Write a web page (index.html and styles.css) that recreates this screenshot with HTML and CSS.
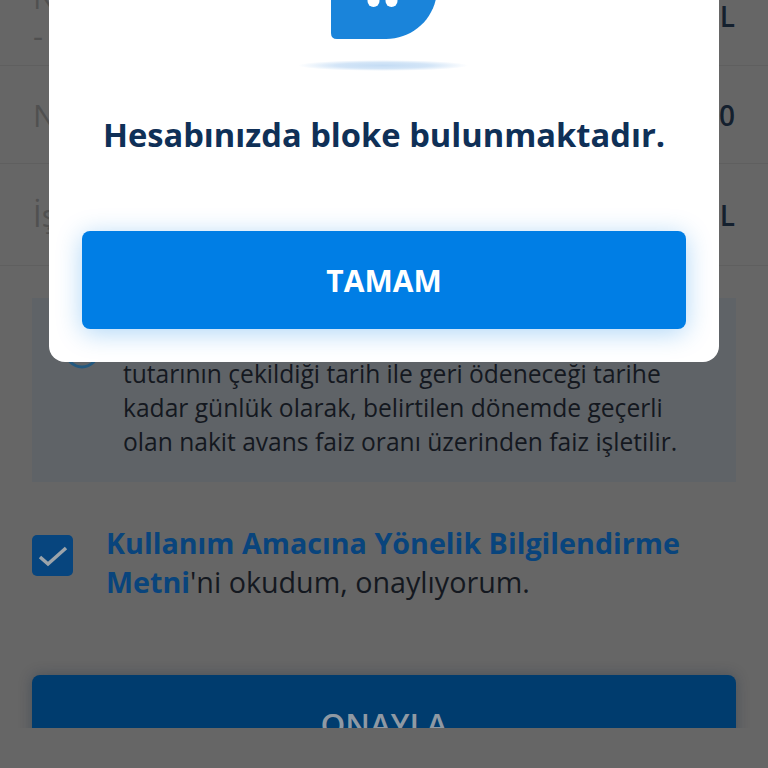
FILE: index.html
```html
<!DOCTYPE html>
<html lang="tr">
<head>
<meta charset="utf-8">
<title>Hesap</title>
<link rel="stylesheet" href="styles.css">
</head>
<body>
<div class="screen">
  <main class="page">
    <div class="row row-first"><div class="row-label">N<br>-</div><div class="row-value">L</div></div>
    <div class="row"><div class="row-label">N</div><div class="row-value">0</div></div>
    <div class="row row-last"><div class="row-label">İş</div><div class="row-value">L</div></div>
    <section class="info">
      <svg class="info-icon" width="36" height="36" viewBox="0 0 36 36"><circle cx="18" cy="18" r="16" fill="none" stroke="#24597f" stroke-width="3"/></svg>
      <p class="info-text">tutarının çekildiği tarih ile geri ödeneceği tarihe<br>kadar günlük olarak, belirtilen dönemde geçerli<br>olan nakit avans faiz oranı üzerinden faiz işletilir.</p>
    </section>
    <label class="consent">
      <span class="checkbox"><svg width="41" height="41" viewBox="0 0 41 41"><path d="M8 22l8 7L34 13" fill="none" stroke="#9ca4aa" stroke-width="3.500"/></svg></span>
      <span class="consent-text"><b class="link">Kullanım Amacına Yönelik Bilgilendirme Metni</b>'ni okudum, onaylıyorum.</span>
    </label>
    <div class="approve">ONAYLA</div>
  </main>
  <div class="footer-mask"></div>
  <div class="modal">
    <svg class="illustration" width="166" height="71" viewBox="0 0 166 71">
      <defs><radialGradient id="sh"><stop offset="0" stop-color="#c4dcf4"/><stop offset=".55" stop-color="#d3e5f7"/><stop offset="1" stop-color="#ffffff"/></radialGradient></defs>
      <path d="M31 -10H137C136 18 113 39 86 39H37Q31 39 31 33Z" fill="#1a84da"/>
      <circle cx="73.500" cy="1" r="6" fill="#fff"/><circle cx="91.500" cy="1" r="6" fill="#fff"/>
      <ellipse cx="83" cy="65.500" rx="85" ry="5.500" fill="url(#sh)"/>
    </svg>
    <h1 class="modal-title">Hesabınızda bloke bulunmaktadır.</h1>
    <button class="modal-button" type="button">TAMAM</button>
  </div>
</div>
</body>
</html>
```

FILE: styles.css
```css
* { box-sizing: border-box; }
html, body { margin: 0; padding: 0; }
body { width: 768px; height: 768px; overflow: hidden; background: #666; font-family: "Open Sans", sans-serif; }
.screen { position: relative; width: 768px; height: 768px; overflow: hidden; background: #666; }
.page { display: flex; flex-direction: column; margin-top: -34px; }
.row { display: flex; justify-content: space-between; height: 98px; padding: 0 33px; align-items: center; border-bottom: 1px solid #5f5f5f; color: #505050; font-size: 32px; line-height: 44px; }
.row-first { height: 100px; }
.row-last { height: 102px; }
.row-label { font-size: 31px; line-height: 38px; }
.row-value { color: #14202e; font-weight: 600; font-size: 28px; }
.info { display: flex; gap: 23px; margin: 32px 32px 0; padding: 0 32px; height: 184px; background: #5f6367; align-items: flex-end; }
.info-icon { flex: none; align-self: flex-start; margin-top: 35px; }
.info-text { margin: 0 0 23px; font-size: 24.600px; line-height: 34px; color: #14181f; white-space: nowrap; }
.consent { display: flex; gap: 33px; margin: 43px 32px 0; align-items: flex-start; }
.checkbox { flex: none; width: 41px; height: 41px; margin-top: 10px; background: #07457e; border-radius: 5px; }
.checkbox svg { display: block; }
.consent-text { margin-top: -2px; font-size: 28.700px; line-height: 39px; color: #14181f; }
.link { color: #09447c; font-weight: 700; }
.approve { margin: 74px 32px 0; height: 98px; border-radius: 8px 8px 0 0; background: #003c6e; color: #8f99a3; font-weight: 600; font-size: 31.500px; line-height: 98px; text-align: center; box-shadow: 0 0 14px rgba(0,30,60,.3); }
.footer-mask { position: absolute; left: 0; right: 0; top: 728px; bottom: 0; background: #666; }
.modal { position: absolute; left: 49px; top: -20px; width: 670px; height: 382px; background: #fff; border-radius: 0 0 16px 16px; display: flex; flex-direction: column; align-items: center; justify-content: flex-end; padding: 0 33px 33px; }
.illustration { display: block; margin: 0 0 0 -2px; overflow: visible; }
.modal-title { margin: 42px 0 74px; font-size: 32.700px; line-height: 44px; font-weight: 700; color: #0f3057; white-space: nowrap; }
.modal-button { width: 604px; height: 98px; border: 0; border-radius: 8px; background: #007ee5; color: #fff; font: 700 30px/94px "Open Sans", sans-serif; padding: 2px 0 0; box-shadow: 0 4px 26px rgba(0,126,229,.32); }
```
